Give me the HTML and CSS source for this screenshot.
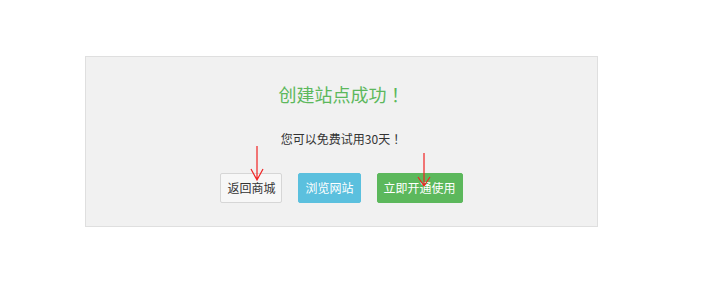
FILE: index.html
```html
<!DOCTYPE html>
<html lang="zh-CN">
<head>
<meta charset="UTF-8">
<title>创建站点成功</title>
<link rel="stylesheet" href="styles.css">
</head>
<body>
<div class="result-box">
  <h2 class="result-title">创建站点成功<span class="bang" lang="zh-TW">！</span></h2>
  <p class="result-tip">您可以免费试用30天<span class="bang" lang="zh-TW">！</span></p>
  <div class="result-actions">
    <a class="btn btn-default" href="#">返回商城</a>
    <a class="btn btn-info" href="#">浏览网站</a>
    <a class="btn btn-success" href="#">立即开通使用</a>
  </div>
</div>

<!-- annotation arrows -->
<svg class="marks" width="711" height="290" viewBox="0 0 711 290">
  <g stroke="#f02222" stroke-width="1.2" fill="none">
    <path d="M257 146 V180 M251 169 L257 180 L263 169"/>
    <path d="M424 153 V186 M418 177 L424 186 L430 177"/>
  </g>
</svg>
</body>
</html>
```

FILE: styles.css
```css
html, body {
  margin: 0;
  padding: 0;
  background: #fff;
}
body {
  position: relative;
  padding: 56px 0 0 85px;
  font-family: "Microsoft YaHei", "Noto Sans CJK SC", "Noto Sans", sans-serif;
  color: #333;
}
.result-box {
  width: 513px;
  box-sizing: border-box;
  background: #f1f1f1;
  border: 1px solid #dfdfdf;
  padding: 25px 0 23px;
  text-align: center;
}
.result-title {
  margin: 0;
  font-size: 18px;
  line-height: 24px;
  font-weight: normal;
  color: #5cb85c;
}
.result-tip {
  margin: 24px 0 0;
  font-size: 12px;
  line-height: 18px;
  color: #333;
}
/* centred full-width punctuation */
.bang {
  font-family: "Noto Sans CJK TC", "Noto Sans CJK SC", sans-serif;
}
.result-actions {
  margin-top: 25px;
  display: flex;
  justify-content: center;
  gap: 16px;
}
.btn {
  display: inline-block;
  height: 30px;
  line-height: 28px;
  padding: 0 6px;
  font-size: 12px;
  text-decoration: none;
  border: 1px solid transparent;
  border-radius: 2px;
  box-sizing: border-box;
}
.btn-default {
  background: #f7f7f7;
  border-color: #d6d6d6;
  color: #333;
}
.btn-info {
  background: #5bc0de;
  border-color: #5bc0de;
  color: #fff;
}
.btn-success {
  background: #5cb85c;
  border-color: #5cb85c;
  color: #fff;
}
.marks {
  position: absolute;
  left: 0;
  top: 0;
  pointer-events: none;
}
```
